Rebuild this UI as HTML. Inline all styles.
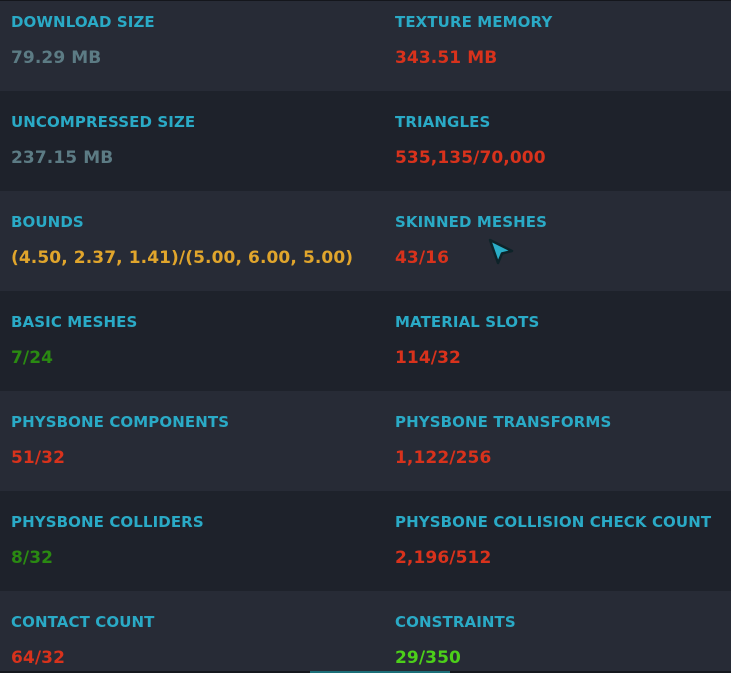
<!DOCTYPE html>
<html><head><style>
html,body{margin:0;padding:0;width:731px;height:673px;overflow:hidden;}
body{background:#272b36;font-family:"DejaVu Sans","Liberation Sans",sans-serif;font-weight:bold;position:relative;}
.row{position:absolute;left:0;width:731px;height:100px;}
.l{background:#272b36}.d{background:#1e222b}
.lab{position:absolute;top:22px;white-space:nowrap;font-size:15px;color:#2aaac6;letter-spacing:0.1px;}
.val{position:absolute;top:57px;white-space:nowrap;font-size:17px;letter-spacing:0.1px;}
.g{color:#5c7b84}.r{color:#d8321c}.y{color:#e0a52c}.gr{color:#2a8a12}.bg{color:#4ccf1a}
</style></head><body>
<div class="row l" style="top:-9px"><div class="lab" style="left:11px">DOWNLOAD SIZE</div><div class="val g" style="left:11px">79.29 MB</div><div class="lab" style="left:395px">TEXTURE MEMORY</div><div class="val r" style="left:395px">343.51 MB</div></div>
<div style="position:absolute;top:0;left:0;width:731px;height:1px;background:#14161c"></div>
<div class="row d" style="top:91px"><div class="lab" style="left:11px">UNCOMPRESSED SIZE</div><div class="val g" style="left:11px">237.15 MB</div><div class="lab" style="left:395px">TRIANGLES</div><div class="val r" style="left:395px">535,135/70,000</div></div>
<div class="row l" style="top:191px"><div class="lab" style="left:11px">BOUNDS</div><div class="val y" style="left:11px">(4.50, 2.37, 1.41)/(5.00, 6.00, 5.00)</div><div class="lab" style="left:395px">SKINNED MESHES</div><div class="val r" style="left:395px">43/16</div>
<svg style="position:absolute;left:484px;top:44px" width="34" height="32" viewBox="0 0 34 32"><path d="M6 5 L28 16 L18 18.5 L14 28 Z" fill="#2aaec8" stroke="#0e2329" stroke-width="2.5" stroke-linejoin="round"/></svg></div>
<div class="row d" style="top:291px"><div class="lab" style="left:11px">BASIC MESHES</div><div class="val gr" style="left:11px">7/24</div><div class="lab" style="left:395px">MATERIAL SLOTS</div><div class="val r" style="left:395px">114/32</div></div>
<div class="row l" style="top:391px"><div class="lab" style="left:11px">PHYSBONE COMPONENTS</div><div class="val r" style="left:11px">51/32</div><div class="lab" style="left:395px">PHYSBONE TRANSFORMS</div><div class="val r" style="left:395px">1,122/256</div></div>
<div class="row d" style="top:491px"><div class="lab" style="left:11px">PHYSBONE COLLIDERS</div><div class="val gr" style="left:11px">8/32</div><div class="lab" style="left:395px">PHYSBONE COLLISION CHECK COUNT</div><div class="val r" style="left:395px">2,196/512</div></div>
<div class="row l" style="top:591px;height:82px"><div class="lab" style="left:11px">CONTACT COUNT</div><div class="val r" style="left:11px">64/32</div><div class="lab" style="left:395px">CONSTRAINTS</div><div class="val bg" style="left:395px">29/350</div></div>
<div style="position:absolute;top:671px;left:0;width:731px;height:2px;background:#15181e"></div>
<div style="position:absolute;top:671px;left:310px;width:140px;height:2px;background:#1b6f78"></div>
</body></html>
